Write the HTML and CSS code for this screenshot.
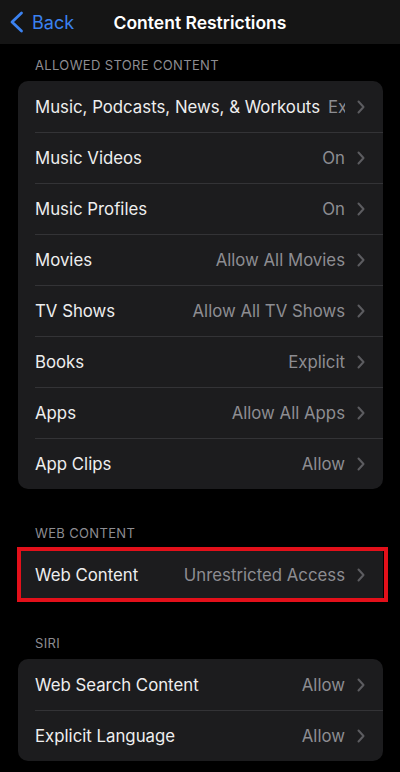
FILE: index.html
```html
<!DOCTYPE html>
<html>
<head>
<meta charset="utf-8">
<link rel="stylesheet" href="styles.css">
</head>
<body>
<div class="nav">
  <div class="back">
    <svg class="back-chev" width="15" height="22" viewBox="0 0 15 22"><path d="M12.5 2 L3 11 L12.5 20" fill="none" stroke="#3b82f0" stroke-width="2.8" stroke-linecap="round" stroke-linejoin="round"/></svg>
    <span>Back</span>
  </div>
  <div class="title">Content Restrictions</div>
</div>

<div class="header h1">ALLOWED STORE CONTENT</div>
<div class="card">
  <div class="row"><span class="label">Music, Podcasts, News, &amp; Workouts</span><span class="value">Explicit</span><svg class="chev" width="8" height="14" viewBox="0 0 8 14"><path d="M1.5 1.5 L6.5 7 L1.5 12.5" fill="none" stroke="#5c5c60" stroke-width="2" stroke-linecap="round" stroke-linejoin="round"/></svg></div>
  <div class="row"><span class="label">Music Videos</span><span class="value">On</span><svg class="chev" width="8" height="14" viewBox="0 0 8 14"><path d="M1.5 1.5 L6.5 7 L1.5 12.5" fill="none" stroke="#5c5c60" stroke-width="2" stroke-linecap="round" stroke-linejoin="round"/></svg></div>
  <div class="row"><span class="label">Music Profiles</span><span class="value">On</span><svg class="chev" width="8" height="14" viewBox="0 0 8 14"><path d="M1.5 1.5 L6.5 7 L1.5 12.5" fill="none" stroke="#5c5c60" stroke-width="2" stroke-linecap="round" stroke-linejoin="round"/></svg></div>
  <div class="row"><span class="label">Movies</span><span class="value">Allow All Movies</span><svg class="chev" width="8" height="14" viewBox="0 0 8 14"><path d="M1.5 1.5 L6.5 7 L1.5 12.5" fill="none" stroke="#5c5c60" stroke-width="2" stroke-linecap="round" stroke-linejoin="round"/></svg></div>
  <div class="row"><span class="label">TV Shows</span><span class="value">Allow All TV Shows</span><svg class="chev" width="8" height="14" viewBox="0 0 8 14"><path d="M1.5 1.5 L6.5 7 L1.5 12.5" fill="none" stroke="#5c5c60" stroke-width="2" stroke-linecap="round" stroke-linejoin="round"/></svg></div>
  <div class="row"><span class="label">Books</span><span class="value">Explicit</span><svg class="chev" width="8" height="14" viewBox="0 0 8 14"><path d="M1.5 1.5 L6.5 7 L1.5 12.5" fill="none" stroke="#5c5c60" stroke-width="2" stroke-linecap="round" stroke-linejoin="round"/></svg></div>
  <div class="row"><span class="label">Apps</span><span class="value">Allow All Apps</span><svg class="chev" width="8" height="14" viewBox="0 0 8 14"><path d="M1.5 1.5 L6.5 7 L1.5 12.5" fill="none" stroke="#5c5c60" stroke-width="2" stroke-linecap="round" stroke-linejoin="round"/></svg></div>
  <div class="row"><span class="label">App Clips</span><span class="value">Allow</span><svg class="chev" width="8" height="14" viewBox="0 0 8 14"><path d="M1.5 1.5 L6.5 7 L1.5 12.5" fill="none" stroke="#5c5c60" stroke-width="2" stroke-linecap="round" stroke-linejoin="round"/></svg></div>
</div>

<div class="header h2">WEB CONTENT</div>
<div class="highlight">
  <div class="card inner">
    <div class="row short"><span class="label">Web Content</span><span class="value">Unrestricted Access</span><svg class="chev" width="8" height="14" viewBox="0 0 8 14"><path d="M1.5 1.5 L6.5 7 L1.5 12.5" fill="none" stroke="#5c5c60" stroke-width="2" stroke-linecap="round" stroke-linejoin="round"/></svg></div>
  </div>
</div>

<div class="header h3">SIRI</div>
<div class="card">
  <div class="row"><span class="label">Web Search Content</span><span class="value">Allow</span><svg class="chev" width="8" height="14" viewBox="0 0 8 14"><path d="M1.5 1.5 L6.5 7 L1.5 12.5" fill="none" stroke="#5c5c60" stroke-width="2" stroke-linecap="round" stroke-linejoin="round"/></svg></div>
  <div class="row"><span class="label">Explicit Language</span><span class="value">Allow</span><svg class="chev" width="8" height="14" viewBox="0 0 8 14"><path d="M1.5 1.5 L6.5 7 L1.5 12.5" fill="none" stroke="#5c5c60" stroke-width="2" stroke-linecap="round" stroke-linejoin="round"/></svg></div>
</div>
</body>
</html>
```

FILE: styles.css
```css
html, body {
  margin: 0;
  padding: 0;
  background: #000;
}
body {
  width: 400px;
  height: 772px;
  overflow: hidden;
  font-family: Inter, "Noto Sans", sans-serif;
  color: #eeeeee;
}
.nav {
  height: 44px;
  background: #151515;
  display: flex;
  align-items: center;
  position: relative;
}
.back {
  display: flex;
  align-items: center;
  padding-left: 9px;
  gap: 8px;
  color: #3b82f0;
  font-size: 18px;
}
.title {
  position: absolute;
  left: 0;
  right: 0;
  text-align: center;
  font-size: 17.5px;
  font-weight: 600;
  color: #fff;
  pointer-events: none;
}
.header {
  font-size: 13px;
  line-height: 16px;
  color: #8d8d92;
  padding-left: 35px;
  letter-spacing: 0.35px;
}
.h1 { padding-top: 13px; padding-bottom: 8px; }
.h2 { padding-top: 36px; padding-bottom: 6px; }
.h3 { padding-top: 33px; padding-bottom: 8px; }
.card {
  margin: 0 17px 0 18px;
  background: #1c1c1e;
  border-radius: 10px;
  overflow: hidden;
}
.row {
  height: 51px;
  display: flex;
  align-items: center;
  padding: 0 18px 0 17px;
  position: relative;
  font-size: 16.8px;
}
.row + .row::before {
  content: "";
  position: absolute;
  left: 17px;
  right: 0;
  top: 0;
  height: 1px;
  background: #333336;
}
.label {
  flex: none;
  white-space: nowrap;
  margin-right: 8px;
}
.value {
  flex: 1;
  min-width: 0;
  overflow: hidden;
  white-space: nowrap;
  text-align: right;
  color: #8d8d92;
}
.chev {
  flex: none;
  margin-left: 12px;
}
.highlight {
  margin: 0 12px 0 17px;
  border: 4px solid #e3101a;
  background: #000;
}
.card.inner {
  margin: 0 1px 0 0;
  border-radius: 0;
}
.row.short {
  height: 47px;
  padding-left: 14px;
}
```
